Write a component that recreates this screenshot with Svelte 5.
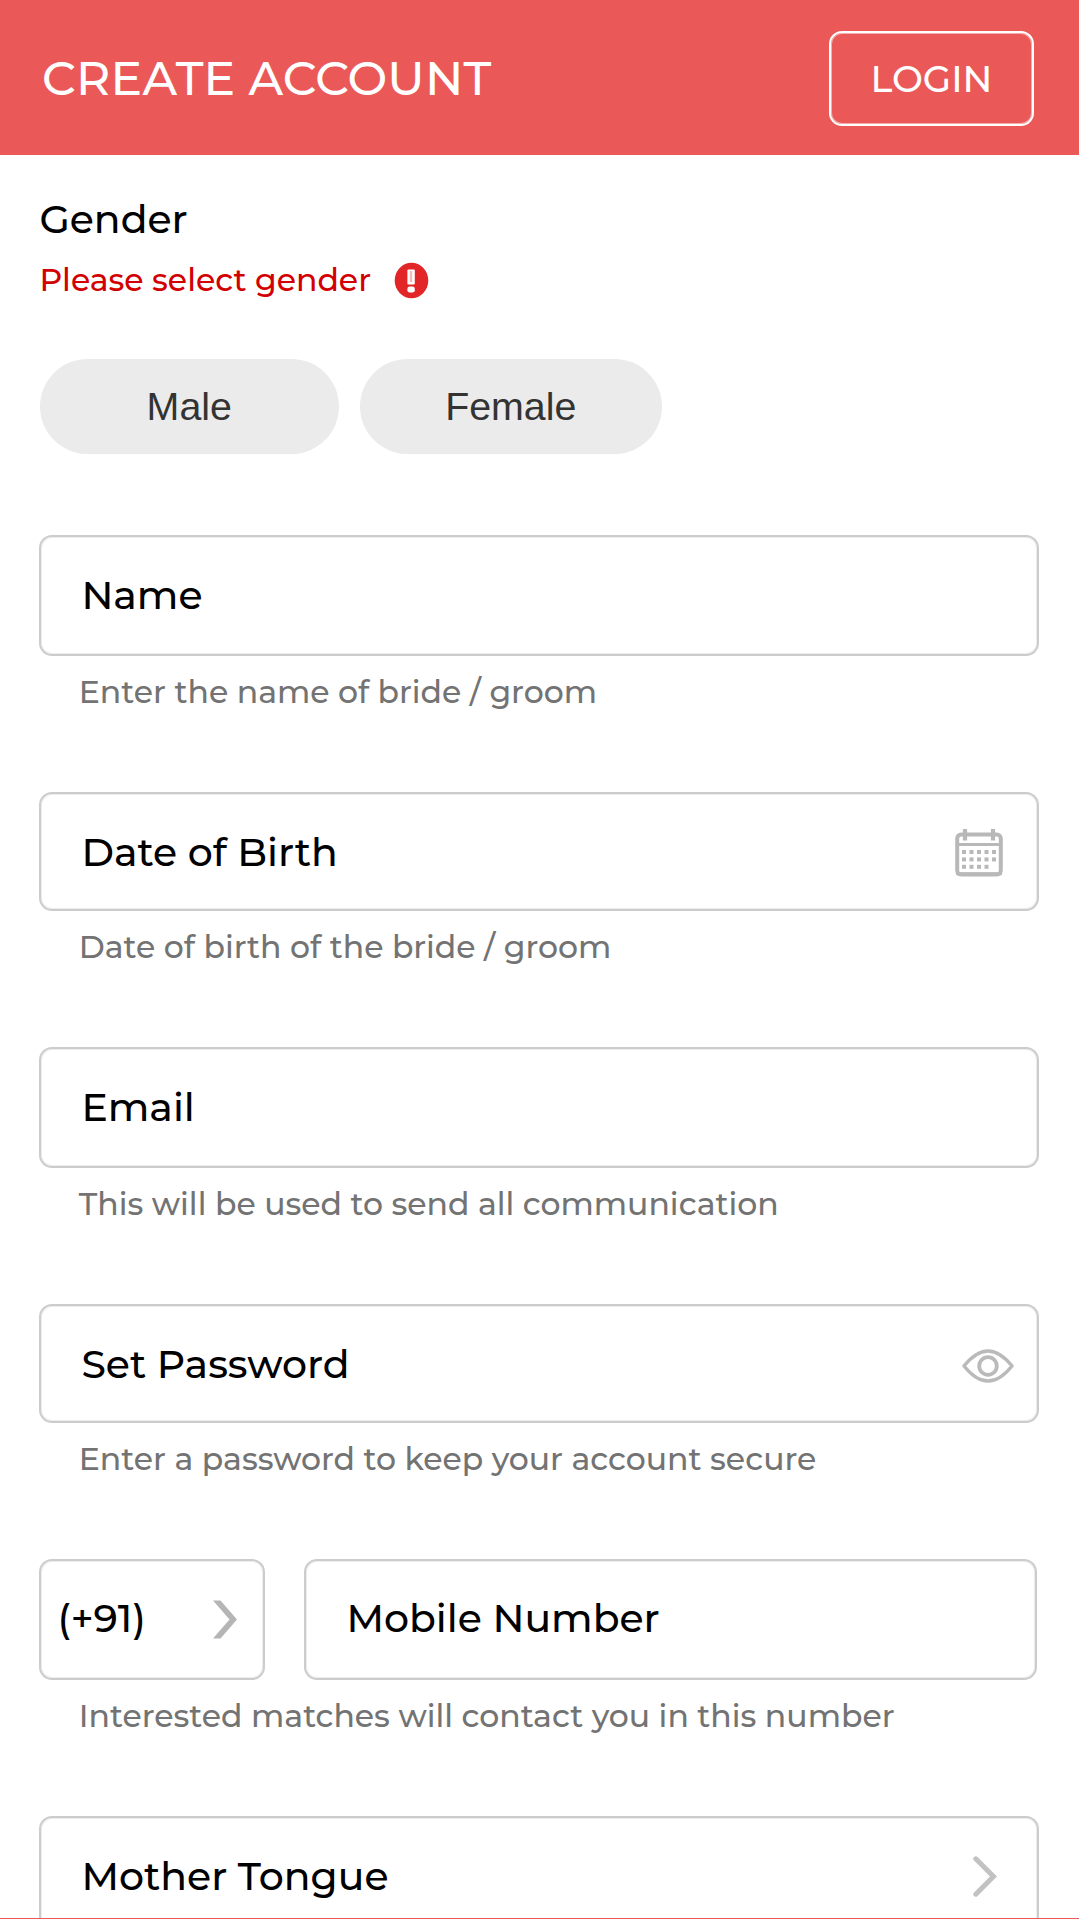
<script>
  const genders = ['Male', 'Female'];
  const dots = [
    [0, 0], [1, 0], [2, 0], [3, 0], [4, 0],
    [0, 1], [1, 1], [2, 1], [3, 1], [4, 1],
    [0, 2], [1, 2], [2, 2], [3, 2],
  ];
</script>

<div class="page">
  <header>
    <h1>CREATE ACCOUNT</h1>
    <button class="login">LOGIN</button>
  </header>

  <main>
    <div class="label">Gender</div>
    <div class="error">
      <span>Please select gender</span>
      <svg width="35" height="37" viewBox="0 0 35 37">
        <ellipse cx="17.5" cy="18.5" rx="16.8" ry="17.8" fill="#e22628" />
        <rect x="13.4" y="7.4" width="7.4" height="15" rx="1" fill="#fff" />
        <rect x="15.8" y="9" width="2.4" height="11" fill="#f6bcbc" />
        <rect x="13.4" y="24.4" width="7.4" height="6.2" rx="2.4" fill="#fff" />
      </svg>
    </div>

    <div class="pills">
      {#each genders as gender}
        <button class="pill">{gender}</button>
      {/each}
    </div>

    <section class="field">
      <div class="box">Name</div>
      <p>Enter the name of bride / groom</p>
    </section>

    <section class="field">
      <div class="box">
        Date of Birth
        <svg class="calendar" width="48" height="48" viewBox="0 0 48 48" fill="none" stroke="#b8b8b8">
          <rect x="2.2" y="5.5" width="43.6" height="40" rx="4" stroke-width="4" />
          <path d="M2.500 44.800h43" stroke-width="3.2" stroke-linecap="round" />
          <path d="M2 15.500h44" stroke-width="3.2" />
          <path d="M10 0v11.500M38 0v11.500" stroke-width="4.2" />
          {#each dots as [col, row]}
            <rect x={7 + col * 7.5} y={21 + row * 7.4} width="4" height="4" fill="#b8b8b8" stroke="none" />
          {/each}
        </svg>
      </div>
      <p>Date of birth of the bride / groom</p>
    </section>

    <section class="field">
      <div class="box">Email</div>
      <p>This will be used to send all communication</p>
    </section>

    <section class="field">
      <div class="box">
        Set Password
        <svg class="eye" width="52" height="34" viewBox="0 0 52 34" fill="none" stroke="#bababa" stroke-width="3.4">
          <path d="M2 17Q14 2 26 2T50 17Q38 32 26 32T2 17Z" stroke-linejoin="round" />
          <circle cx="26" cy="17" r="8.8" stroke-width="3.8" />
        </svg>
      </div>
      <p>Enter a password to keep your account secure</p>
    </section>

    <section class="field">
      <div class="phone">
        <div class="box code">
          <span>(+91)</span>
          <svg width="24" height="39" viewBox="0 0 24 39" fill="#b5b5b5">
            <path d="M0 .5h7.500L24 19.500 7.500 38.500H0L16.500 19.500Z" />
          </svg>
        </div>
        <div class="box number"><span>Mobile Number</span></div>
      </div>
      <p>Interested matches will contact you in this number</p>
    </section>

    <section class="field">
      <div class="box">
        Mother Tongue
        <svg class="open" width="24" height="41" viewBox="0 0 24 41" fill="none" stroke="#c2c2c2" stroke-width="5">
          <path d="M2.800 2.800 20.500 20.500 2.800 38.200" stroke-linecap="round" />
        </svg>
      </div>
    </section>
  </main>
  <div class="bottom-line"></div>
</div>

<style>
  :global(body) {
    background: #fff;
  }
  * {
    box-sizing: border-box;
  }
  .page {
    display: flex;
    flex-direction: column;
    width: 1079px;
    height: 1919px;
    overflow: hidden;
    font: 500 39.375px/48px Montserrat, 'Open Sans', sans-serif;
    color: #000;
  }
  header {
    display: flex;
    flex: none;
    align-items: center;
    justify-content: space-between;
    height: 154.6px;
    padding: 0 45px 0 42px;
    background: #eb5858;
    color: #fff;
  }
  h1 {
    margin: 2px 0 0;
    font-size: 47.25px;
    font-weight: 500;
    line-height: 58px;
    letter-spacing: 0.25px;
  }
  button {
    margin: 0;
    padding: 0;
    font: inherit;
  }
  .login {
    width: 205px;
    height: 95px;
    margin-top: 3px;
    padding-top: 1px;
    border: 2px solid #fff;
    border-radius: 13px;
    background: none;
    box-shadow: inset 0 0 0 1px rgb(255 255 255 / 0.5);
    color: #fff;
    font-size: 36.75px;
  }
  main {
    flex: 1;
    min-height: 0;
    overflow: hidden;
    padding: 40.4px 39px 0 39.375px;
  }
  .error {
    display: flex;
    align-items: center;
    gap: 22.5px;
    height: 38px;
    margin-top: 18px;
    color: #d20000;
    font-size: 31.5px;
    line-height: 38px;
  }
  .error svg {
    margin-top: 2px;
  }
  .pills {
    display: flex;
    gap: 21px;
    height: 95px;
    margin: 60px 0 81px 0.4px;
  }
  .pill {
    width: 299px;
    border: 0;
    border-radius: 48px;
    background: #ebebeb;
    color: #333;
    font: 39.375px 'Liberation Sans', Arial, sans-serif;
  }
  .pill:last-child {
    width: 302px;
  }
  .field {
    height: 257px;
  }
  .field:nth-of-type(even) {
    height: 255px;
  }
  .box {
    display: flex;
    align-items: center;
    justify-content: space-between;
    width: 1000px;
    height: 121px;
    padding: 0 34px 0 40px;
    border: 2px solid #ccc;
    border-radius: 13px;
    box-shadow: inset 0 0 0 1px #ececec;
  }
  .field:nth-of-type(even) .box {
    height: 119px;
    padding-top: 2px;
  }
  .field p {
    margin: 17.5px 0 0 39.375px;
    color: #737373;
    font-size: 31.5px;
    line-height: 38px;
    white-space: nowrap;
  }
  .box:has(.eye) {
    padding-right: 23.5px;
  }
  .eye {
    margin-top: 3px;
  }
  .calendar {
    margin-top: 1px;
  }
  .phone {
    display: flex;
    gap: 39px;
  }
  .phone span {
    margin-bottom: 2px;
  }
  .code {
    width: 226px;
    padding: 0 26.5px 0 16px;
  }
  .number {
    width: 733px;
  }
  .box:has(.open) {
    padding-right: 40.5px;
  }
  .bottom-line {
    flex: none;
    height: 1px;
    background: #eb5858;
  }
</style>
